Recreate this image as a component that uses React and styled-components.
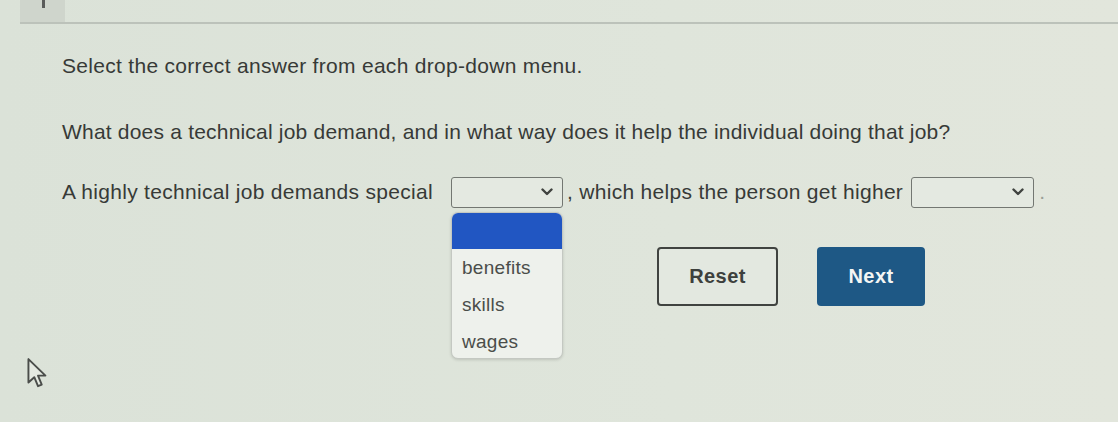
import React from 'react'
import styled, { createGlobalStyle } from 'styled-components'

const GlobalStyle = createGlobalStyle`
  html, body {
    margin: 0;
    padding: 0;
    background: #dde3da;
  }

  body {
    font-family: "Liberation Sans", Arial, sans-serif;
    color: #373a37;
  }
`

const Page = styled.div`
  height: 422px;
  overflow: hidden;
  position: relative;
  background: linear-gradient(90deg, #dbe2d8 0%, #dfe5db 60%, #e2e6dc 100%);
`

const TopBar = styled.div`
  height: 22px;
  margin-left: 20px;
  border-bottom: 2px solid #bcc2ba;
  display: flex;
`

const Tab = styled.div`
  width: 45px;
  background: #cfd5cc;
  position: relative;

  &::after {
    content: '';
    position: absolute;
    left: 22px;
    top: 0;
    width: 3px;
    height: 8px;
    background: #5a5c5a;
  }
`

const Content = styled.div`
  padding: 30px 0 0 62px;
`

const Instruction = styled.p`
  margin: 0;
  font-size: 21px;
  line-height: 24px;
  letter-spacing: 0.3px;
`

const Question = styled.p`
  margin: 42px 0 0;
  font-size: 21px;
  line-height: 24px;
  letter-spacing: 0.2px;
`

const Sentence = styled.div`
  margin-top: 32px;
  display: flex;
  align-items: center;
  font-size: 21px;
  letter-spacing: 0.3px;
  height: 32px;
  white-space: nowrap;
`

const SelectWrap = styled.div`
  position: relative;
  margin: 0 ${p => p.$right}px 0 ${p => p.$left}px;
`

const SelectBox = styled.div`
  box-sizing: border-box;
  width: ${p => p.$width}px;
  height: 31px;
  border: 1.5px solid #737772;
  border-radius: 3px;
  background: #e4e9e1;
  display: flex;
  align-items: center;
  justify-content: flex-end;
  padding-right: 9px;
`

const Menu = styled.div`
  position: absolute;
  top: 35px;
  left: 0;
  box-sizing: border-box;
  width: 112px;
  height: 147px;
  background: #eef1ec;
  border: 1px solid #c4c8c2;
  border-radius: 7px;
  box-shadow: 0 1px 3px rgba(0, 0, 0, 0.15);
  overflow: hidden;
`

const MenuHeader = styled.div`
  height: 36px;
  background: #2156c2;
`

const Option = styled.div`
  height: 37px;
  line-height: 37px;
  padding-left: 10px;
  font-size: 19px;
  letter-spacing: 0.3px;
  color: #4a4d4a;
`

const Actions = styled.div`
  margin: 39px 0 0 595px;
  display: flex;
  gap: 39px;
`

const Button = styled.button`
  box-sizing: border-box;
  height: 59px;
  width: ${p => p.$width}px;
  border-radius: 4px;
  font-family: inherit;
  font-size: 20px;
  font-weight: bold;
  letter-spacing: 0.4px;
  border: ${p => (p.$primary ? 'none' : '2px solid #404340')};
  background: ${p => (p.$primary ? '#1e5885' : '#e3e8e0')};
  color: ${p => (p.$primary ? '#f4f6f4' : '#3d403d')};
  padding: 0;
`

const Dot = styled.span`
  margin-left: 5px;
  color: #9aa098;
`

const Cursor = styled.svg`
  position: absolute;
  left: 26px;
  top: 357px;
`

const Chevron = () => (
  <svg width="12" height="8" viewBox="0 0 12 8">
    <path d="M1.5 1.5 L6 6 L10.5 1.5" fill="none" stroke="#404340" strokeWidth="2.4" strokeLinecap="round" strokeLinejoin="round" />
  </svg>
)

const options = ['benefits', 'skills', 'wages']

const App = () => (
  <Page>
    <GlobalStyle />
    <TopBar>
      <Tab />
    </TopBar>
    <Content>
      <Instruction>Select the correct answer from each drop-down menu.</Instruction>
      <Question>
        What does a technical job demand, and in what way does it help the individual doing that job?
      </Question>
      <Sentence>
        A highly technical job demands special
        <SelectWrap $left={18} $right={4}>
          <SelectBox $width={112}>
            <Chevron />
          </SelectBox>
          <Menu>
            <MenuHeader />
            {options.map(o => (
              <Option key={o}>{o}</Option>
            ))}
          </Menu>
        </SelectWrap>
        , which helps the person get higher
        <SelectWrap $left={8} $right={0}>
          <SelectBox $width={123}>
            <Chevron />
          </SelectBox>
        </SelectWrap>
        <Dot>.</Dot>
      </Sentence>
      <Actions>
        <Button $width={121}>Reset</Button>
        <Button $width={108} $primary>Next</Button>
      </Actions>
    </Content>
    <Cursor width="24" height="34" viewBox="0 0 22 32">
      <path
        d="M2 2 L2 24 L7.5 19 L11 27.5 L14.5 26 L11 17.5 L18 17.5 Z"
        fill="#e4e9e1"
        stroke="#4a4d4a"
        strokeWidth="1.8"
        strokeLinejoin="round"
      />
    </Cursor>
  </Page>
)

export default App
